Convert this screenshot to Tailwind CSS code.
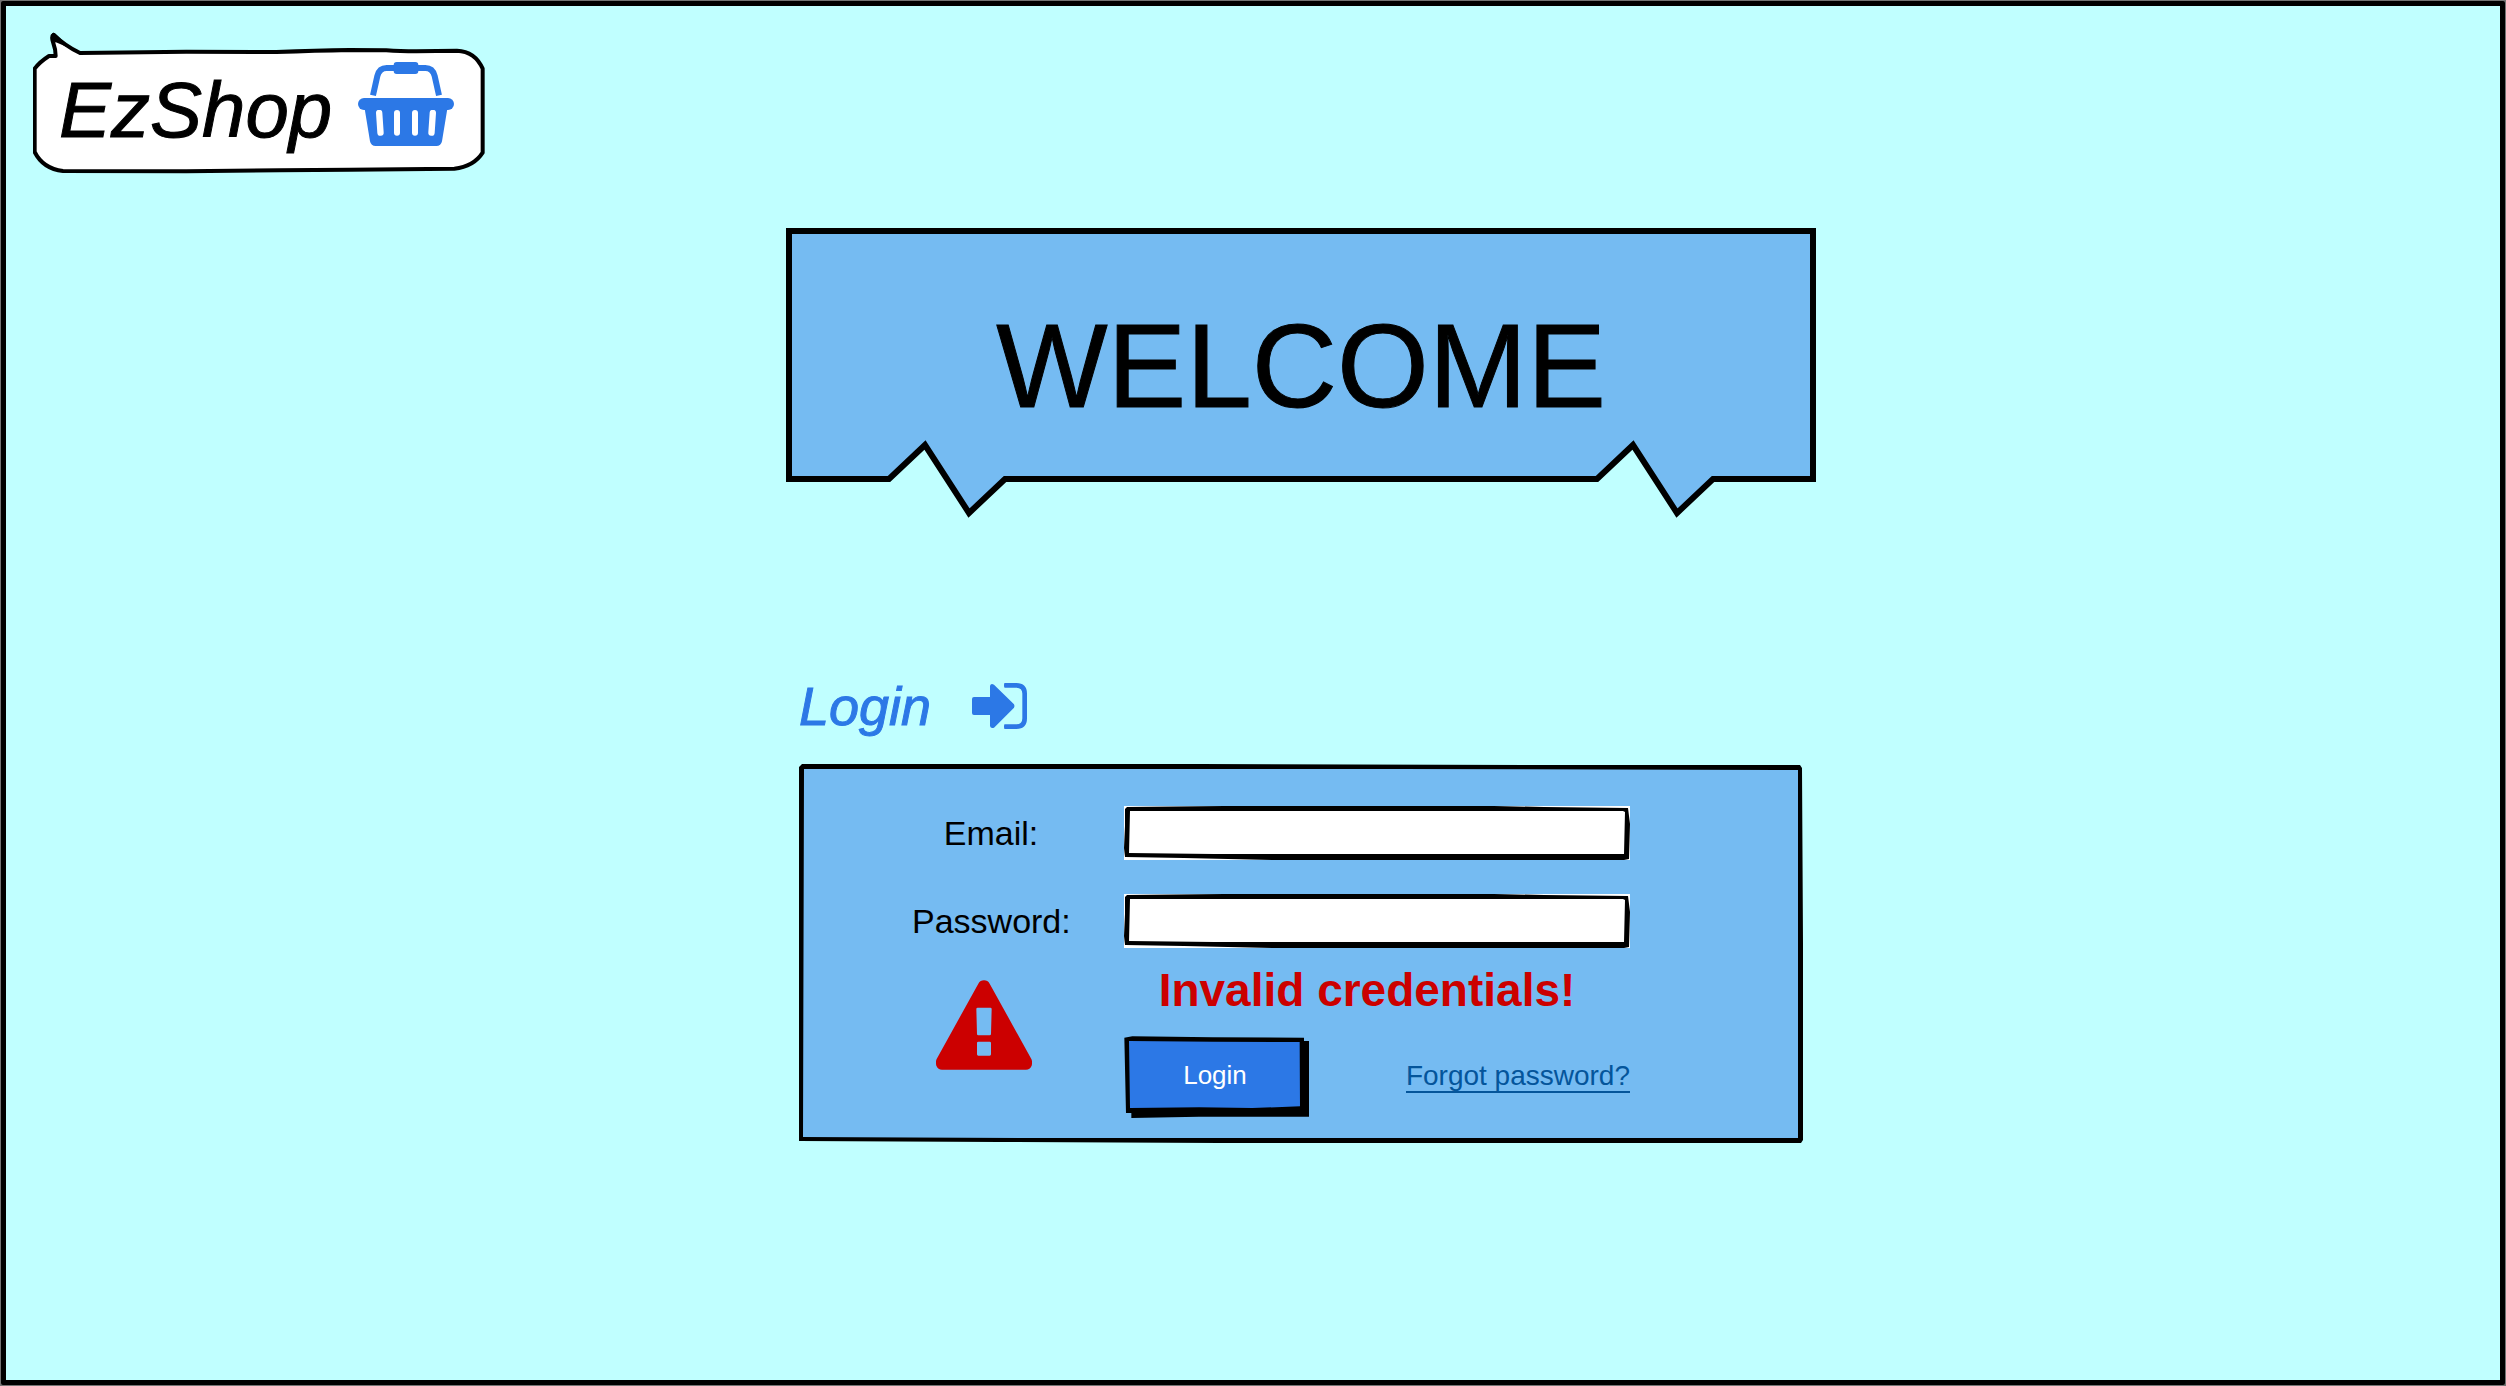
<!DOCTYPE html>
<html lang="en">
<head>
<meta charset="utf-8">
<title>EzShop – Login</title>
<script src="https://cdn.jsdelivr.net/npm/@tailwindcss/browser@4"></script>
</head>
<body class="bg-neutral-500 p-px font-['Liberation_Sans',Arial,sans-serif] text-black">
<div class="flex min-h-[calc(100vh-2px)] flex-col rounded-xs border-[5px] border-black bg-[#c0ffff] pt-[26px]">

  <header class="px-[27px]">
    <div class="relative isolate flex h-[142px] w-[452px] items-start gap-[26px] pt-[30px] pl-[26px]">
      <svg class="absolute inset-0 -z-10 size-full" viewBox="100 96 1356 426" aria-hidden="true">
        <path d="M105 206Q120 186 148 168L168 168Q168 148 160 126Q154 108 162 104Q196 138 241 159L560 155L830 156Q950 152 1050 150L1160 151Q1200 154 1250 154L1372 152Q1426 154 1449 206V458Q1422 500 1364 506L1050 509L840 511L560 514L190 513Q130 506 105 456Z" fill="#fff" stroke="#000" stroke-width="12" stroke-linejoin="round"/>
        <path d="M157 108Q164 126 172 124L200 136L161 102Z" stroke="#000" stroke-width="7" stroke-linejoin="round"/>
      </svg>
      <h1 class="text-[78px] leading-[96px] italic [-webkit-text-stroke:1px_currentColor]">EzShop</h1>
      <svg class="h-[84px] w-24 shrink-0" viewBox="1074 186 288 252" role="img" aria-label="Shopping basket" fill="#2c78e6">
        <path d="M1119 286L1132 228Q1138 204 1160 204H1276Q1298 204 1304 228L1317 286" fill="none" stroke="#2c78e6" stroke-width="18"/>
        <rect x="1181" y="186" width="74" height="36" rx="9"/>
        <rect x="1074" y="294" width="288" height="36" rx="18"/>
        <path fill-rule="evenodd" d="M1094 326H1342L1326 424Q1323 438 1309 438H1127Q1113 438 1110 424ZM1128 339L1132 399A9 9 0 0 0 1151 397L1147 338A9 9 0 0 0 1128 339ZM1182 339V398A9 9 0 0 0 1200 398V339A9 9 0 0 0 1182 339ZM1236 339V398A9 9 0 0 0 1254 398V339A9 9 0 0 0 1236 339ZM1289 338L1285 397A9 9 0 0 0 1304 399L1308 339A9 9 0 0 0 1289 338Z"/>
      </svg>
    </div>
  </header>

  <main class="flex flex-col items-center pt-[54px] pb-16 pl-24">
    <div class="relative isolate h-[290px] w-full max-w-[1030px] pt-[78px] text-center">
      <svg class="absolute inset-0 -z-10 size-full" viewBox="0 0 1030 290" preserveAspectRatio="none" aria-hidden="true">
        <path d="M3 3H1027V251H927L891 285L847 217L811 251H219L183 285L139 217L103 251H3Z" fill="#75bbf2" stroke="#000" stroke-width="6"/>
      </svg>
      <h2 class="text-[118px] leading-[120px] [-webkit-text-stroke:1px_currentColor]">WELCOME</h2>
    </div>

    <section class="mt-[152px] w-full max-w-[1030px] px-[13px]">
      <div class="flex items-center gap-[41px] text-[#2c78e6]">
        <h2 class="text-[54px] leading-[72px] italic [-webkit-text-stroke:1px_currentColor]">Login</h2>
        <svg class="h-[46px] w-[55px]" viewBox="576 69 165 138" fill="currentColor" aria-hidden="true">
          <path d="M576 117Q576 111 582 111H630V78Q632 69 642 74L702 133Q705 138 702 143L642 203Q632 207 630 198V165H582Q576 165 576 159Z"/>
          <path d="M674 69H709Q741 69 741 101V175Q741 207 709 207H674Q672 207 672 200T674 193H709Q727 193 727 175V101Q727 83 709 83H674Q672 83 672 76T674 69Z"/>
        </svg>
      </div>

      <form class="relative isolate mt-[22px] grid grid-cols-[158px_1fr] gap-x-[54px] pt-[42px] pr-[173px] pb-[25px] pl-[113px]">
        <svg class="absolute inset-0 -z-10 size-full" viewBox="0 0 1004 379" preserveAspectRatio="none" aria-hidden="true">
          <path d="M3 3L1000 4L1001 376H500L2 375Z" fill="#75bbf2"/>
          <path fill-rule="evenodd" d="M0 3L3 0H400L760 1L1001 1L1003 4L1004 180V376L1002 379H420L200 378L0 377V250ZM5 5L4 373L220 374H999V190L999 6L600 5Z"/>
        </svg>

        <label for="email" class="self-center text-center text-[34px] leading-[54px]">Email:</label>
        <div class="relative">
          <input id="email" type="email" class="block h-[54px] w-full bg-white px-4 text-[28px] outline-none">
          <svg class="pointer-events-none absolute inset-0 size-full" viewBox="0 0 506 54" preserveAspectRatio="none" aria-hidden="true">
            <path fill-rule="evenodd" d="M1 3L3 1L100 0H370L420 1L504 2L506 18L505 53L500 54H150L60 52L1 51L0 42L1 20ZM6 5L5 47L90 48H500L501 6L499 5Z"/>
          </svg>
        </div>

        <label for="password" class="mt-[34px] self-center text-center text-[34px] leading-[54px]">Password:</label>
        <div class="relative mt-[34px]">
          <input id="password" type="password" class="block h-[54px] w-full bg-white px-4 text-[28px] outline-none">
          <svg class="pointer-events-none absolute inset-0 size-full" viewBox="0 0 506 54" preserveAspectRatio="none" aria-hidden="true">
            <path fill-rule="evenodd" d="M1 3L3 1L100 0H370L420 1L504 2L506 18L505 53L500 54H150L60 52L1 51L0 42L1 20ZM6 5L5 47L90 48H500L501 6L499 5Z"/>
          </svg>
        </div>

        <svg class="mt-8 ml-6 h-[90px] w-24" viewBox="168 602 288 268" role="img" aria-label="Warning">
          <path fill="#c00" fill-rule="evenodd" d="M295 612Q301 602 312 602T329 612L454 838Q458 846 455 858Q450 870 438 870H186Q174 870 169 858Q166 846 170 838ZM289 688Q289 684 293 684H331Q335 684 335 688L333 763Q333 767 329 767H295Q291 767 291 763ZM291 790V824Q291 828 295 828H329Q333 828 333 824V790Q333 786 329 786H295Q291 786 291 790Z"/>
        </svg>
        <div class="mt-3">
          <p role="alert" class="pr-5 text-center text-[46px] leading-[60px] font-bold text-[#c00]">Invalid credentials!</p>
          <div class="mt-4 flex items-center justify-between">
            <button type="submit" class="relative isolate h-[82px] w-[186px] pr-1 pb-1 text-[26px] text-white">
              <svg class="absolute inset-0 -z-10 size-full" viewBox="735 768 558 246" preserveAspectRatio="none" aria-hidden="true">
                <path d="M736 773L760 769L1000 772L1275 773V783H1290V1010H960L757 1014V999H741Z"/>
                <path fill="#2c78e6" d="M750 783L1000 785L1262 786L1263 979L1120 984L960 982L753 984Z"/>
              </svg>
              Login
            </button>
            <a href="#" class="border-b-2 border-[#04559b] text-[28px] leading-[30px] text-[#04559b]">Forgot password?</a>
          </div>
        </div>
      </form>
    </section>
  </main>
</div>
</body>
</html>
